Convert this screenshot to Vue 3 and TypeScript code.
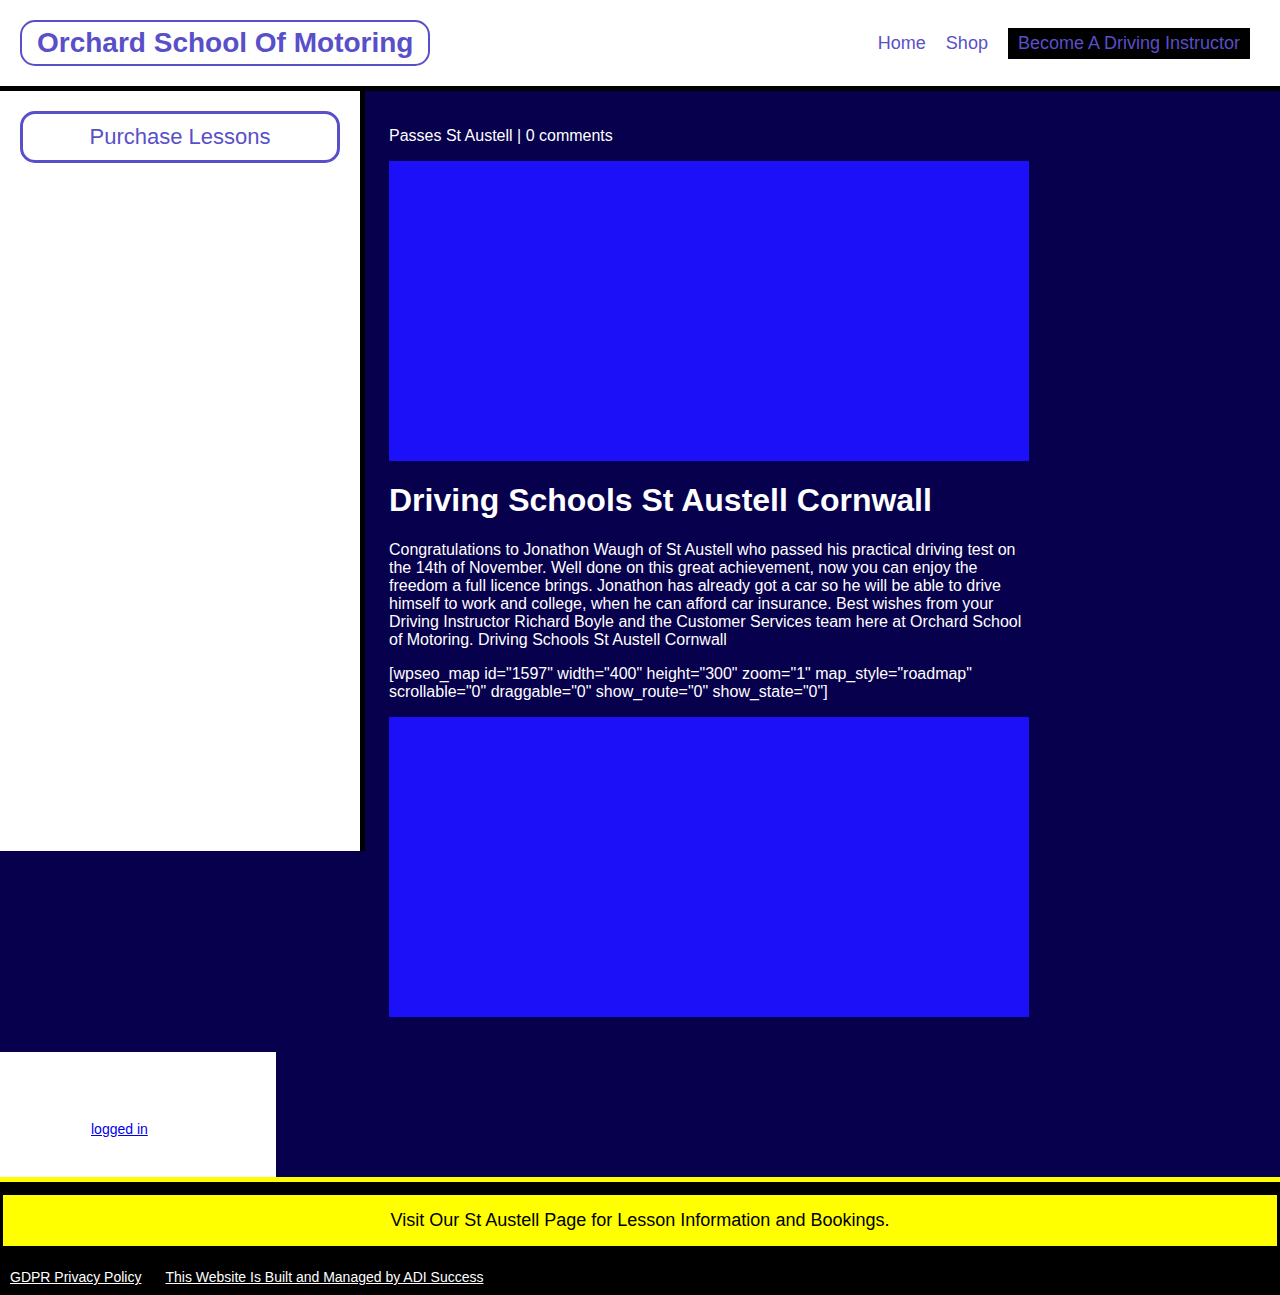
<script setup lang="ts">
interface NavItem {
  label: string
  highlighted?: boolean
}

const navItems: NavItem[] = [
  { label: 'Home' },
  { label: 'Shop' },
  { label: 'Become A Driving Instructor', highlighted: true },
]

const footerLinks: string[] = [
  'GDPR Privacy Policy',
  'This Website Is Built and Managed by ADI Success',
]
</script>

<template>
  <div class="page">
    <header class="header">
      <a class="logo" href="#">Orchard School Of Motoring</a>
      <nav class="nav">
        <a
          v-for="item in navItems"
          :key="item.label"
          href="#"
          class="nav-link"
          :class="{ highlighted: item.highlighted }"
        >{{ item.label }}</a>
      </nav>
    </header>

    <div class="body">
      <aside class="sidebar">
        <a class="purchase" href="#">Purchase Lessons</a>
      </aside>
      <main class="content">
        <article class="post">
          <p>Passes St Austell | 0 comments</p>
          <div class="panel"></div>
          <h1>Driving Schools St Austell Cornwall</h1>
          <p>
            Congratulations to Jonathon Waugh of St Austell who passed his practical driving test on
            the 14th of November. Well done on this great achievement, now you can enjoy the freedom
            a full licence brings. Jonathon has already got a car so he will be able to drive himself
            to work and college, when he can afford car insurance. Best wishes from your Driving
            Instructor Richard Boyle and the Customer Services team here at Orchard School of
            Motoring. Driving Schools St Austell Cornwall
          </p>
          <p>
            [wpseo_map id="1597" width="400" height="300" zoom="1" map_style="roadmap"
            scrollable="0" draggable="0" show_route="0" show_state="0"]
          </p>
          <div class="panel"></div>
        </article>
      </main>
    </div>

    <section class="comments">
      <a href="#">logged in</a>
    </section>

    <footer class="footer">
      <a class="banner" href="#">Visit Our St Austell Page for Lesson Information and Bookings.</a>
      <div class="footer-links">
        <a v-for="link in footerLinks" :key="link" href="#">{{ link }}</a>
      </div>
    </footer>
  </div>
</template>

<style>
body {
  margin: 0;
  background: #07004d;
}
</style>

<style scoped>
.page {
  background: #07004d;
  color: #fff;
  font-family: "Liberation Sans", Arial, Helvetica, sans-serif;
  font-size: 16px;
  line-height: 18px;
}

.header {
  display: flex;
  align-items: center;
  justify-content: space-between;
  padding: 20px 30px 20px 20px;
  background: #fff;
  border-bottom: 5px solid #000;
}

.logo {
  padding: 5px 15px 6px;
  border: 2px solid #584fc9;
  border-radius: 15px;
  color: #584fc9;
  font-size: 28px;
  font-weight: bold;
  line-height: 31px;
  text-decoration: none;
}

.nav {
  display: flex;
  gap: 20px;
}

.nav-link {
  padding: 5px 0;
  color: #584fc9;
  font-size: 18px;
  line-height: 21px;
  text-decoration: none;
}

.nav-link.highlighted {
  padding: 5px 10px;
  background: #000;
}

.body {
  display: flex;
  align-items: flex-start;
}

.sidebar {
  box-sizing: border-box;
  flex: 0 0 365px;
  min-height: 760px;
  padding: 20px;
  background: #fff;
  border-right: 5px solid #000;
}

.purchase {
  display: block;
  padding: 10px 10px 11px;
  border: 3px solid #584fc9;
  border-radius: 15px;
  color: #584fc9;
  font-size: 22px;
  line-height: 25px;
  text-align: center;
  text-decoration: none;
}

.content {
  flex: 1;
  padding: 36px 24px 35px;
}

.post {
  width: 50vw;
}

.post p {
  margin: 0 0 16px;
}

.panel {
  height: 300px;
  background: #1c10f8;
}

.post h1 {
  margin: 21px 0 22px;
  font-size: 32px;
  line-height: 37px;
}

.comments {
  box-sizing: border-box;
  width: fit-content;
  padding: 69px 128px 40px 91px;
  background: #fff;
  font-size: 14px;
  line-height: 16px;
}

.comments a {
  color: #00e;
}

.footer {
  padding: 13px 3px 10px;
  background: #000;
  border-top: 5px solid #ff0;
}

.banner {
  display: block;
  padding: 15px;
  background: #ff0;
  color: #000;
  font-size: 18px;
  line-height: 21px;
  text-align: center;
  text-decoration: none;
}

.footer-links {
  display: flex;
  gap: 24px;
  margin-top: 23px;
  padding: 0 7px;
  font-size: 14px;
  line-height: 16px;
}

.footer-links a {
  color: #fff;
}
</style>
